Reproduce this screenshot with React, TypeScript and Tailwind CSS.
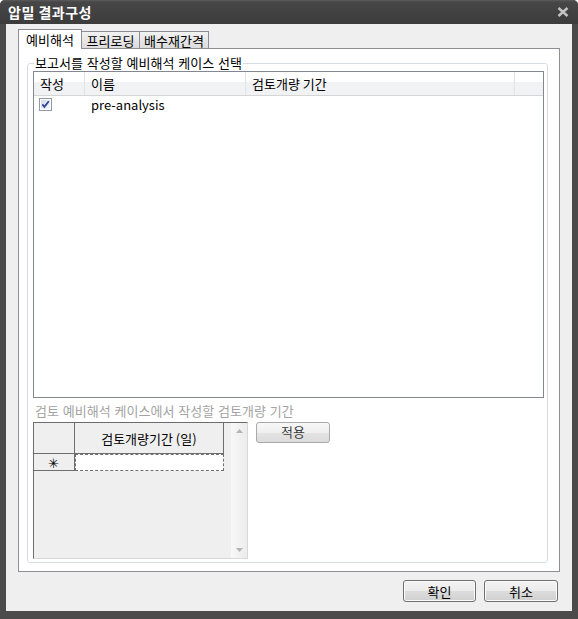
import React from "react";

function CheckBox() {
  return (
    <svg width="13" height="13" viewBox="0 0 13 13">
      <defs>
        <linearGradient id="cbg" x1="0" y1="0" x2="1" y2="1">
          <stop offset="0" stopColor="#d4dbe6" />
          <stop offset="1" stopColor="#f6f8fb" />
        </linearGradient>
      </defs>
      <rect x="0.5" y="0.5" width="12" height="12" fill="#fff" stroke="#8f99a8" />
      <rect x="2" y="2" width="9" height="9" fill="url(#cbg)" />
      <path d="M3.3 6.4 L5.4 8.8 L9.8 3.2" fill="none" stroke="#2a3f9c" strokeWidth="1.7" />
    </svg>
  );
}

function Btn({ children, w }: { children: React.ReactNode; w: string }) {
  return (
    <div
      className={`${w} h-[22px] flex items-center justify-center rounded-[3px] border border-[#707070] bg-[linear-gradient(#f3f3f3_0%,#ebebeb_50%,#dddddd_50%,#cfcfcf_100%)] leading-none text-black shadow-[inset_0_0_0_1px_#fbfbfb]`}
    >
      {children}
    </div>
  );
}

export default function App() {
  return (
    <div className="w-[578px] h-[619px] bg-[#4b4b4b] flex flex-col rounded-t-[5px] overflow-hidden font-['Noto_Sans_CJK_KR','Noto_Sans',sans-serif] text-[13px] text-black">
      {/* title bar */}
      <div className="h-[24px] shrink-0 flex items-center justify-between pl-[8px] pr-[9px] bg-[linear-gradient(#5c5c5c_0px,#474747_2px,#3c3c3c_100%)]">
        <span className="text-white font-bold text-[14px] leading-none tracking-[0.5px]">압밀 결과구성</span>
        <svg width="12" height="10" viewBox="0 0 12 10">
          <path d="M1.5 1 L10.5 9 M10.5 1 L1.5 9" stroke="#c4c4c4" strokeWidth="2.4" />
        </svg>
      </div>

      {/* body */}
      <div className="flex-1 mx-[6px] mb-[8px] bg-[#efefef] flex flex-col pt-[4px] px-[12px]">
        {/* tabs */}
        <div className="h-[20px] flex items-end">
          <div className="w-[64px] h-[20px] bg-white border-t border-l border-r border-[#8c8e94] flex items-center pl-[7px] leading-none relative z-10 -mb-px pb-px">
            예비해석
          </div>
          <div className="w-[58px] h-[17px] border-t border-r border-[#8c8e94] bg-[linear-gradient(#f2f2f2,#dcdcdc)] flex items-center justify-center leading-none">
            프리로딩
          </div>
          <div className="w-[69px] h-[17px] border-t border-r border-[#8c8e94] bg-[linear-gradient(#f2f2f2,#dcdcdc)] flex items-center justify-center leading-none">
            배수재간격
          </div>
        </div>

        {/* pane */}
        <div className="h-[524px] border border-[#8c8e94] bg-white flex flex-col">
          <div className="relative ml-[8px] mt-[14px] mr-[11px] mb-[8px] flex-1 border border-[#d5dde3] rounded-[3px] flex flex-col pl-[5px] pt-[7px]">
            <span className="absolute left-[6px] -top-[8px] bg-white px-[1px] leading-[14px] whitespace-nowrap [word-spacing:1px]">
              보고서를 작성할 예비해석 케이스 선택
            </span>

            {/* list view */}
            <div className="w-[511px] h-[327px] border border-[#828790] bg-white flex flex-col">
              <div className="h-[24px] flex border-b border-[#d5d5d5] bg-[linear-gradient(#ffffff_0%,#ffffff_45%,#f1f2f4_45%,#f1f2f4_100%)]">
                <div className="w-[51px] border-r border-[#e2e3e5] flex items-center pl-[6px] leading-none">작성</div>
                <div className="w-[161px] border-r border-[#e2e3e5] flex items-center pl-[6px] leading-none">이름</div>
                <div className="w-[269px] border-r border-[#e2e3e5] flex items-center pl-[6px] leading-none">검토개량 기간</div>
                <div className="flex-1" />
              </div>
              <div className="h-[17px] flex items-center">
                <div className="w-[51px] pl-[5px] flex items-center">
                  <CheckBox />
                </div>
                <div className="pl-[6px] leading-none">pre-analysis</div>
              </div>
            </div>

            {/* second label */}
            <div className="h-[24px] flex items-center pl-[2px] pt-[1px] text-[#a3a3a3] leading-none whitespace-nowrap [word-spacing:1px]">
              검토 예비해석 케이스에서 작성할 검토개량 기간
            </div>

            {/* grid + apply */}
            <div className="flex items-start">
              <div className="w-[215px] h-[137px] border-l border-t border-[#6c6c6c] border-r border-b border-r-[#d8d8d8] border-b-[#d8d8d8] bg-[#efefef] flex">
                <div className="w-[190px] flex flex-col">
                  <div className="flex h-[31px]">
                    <div className="w-[41px] border-r border-b border-[#6e6e6e] bg-[#efefef]" />
                    <div className="w-[150px] border-r border-b border-[#6e6e6e] bg-[#efefef] flex items-center justify-center leading-none">
                      검토개량기간 (일)
                    </div>
                  </div>
                  <div className="flex h-[17px]">
                    <div className="w-[41px] border-r border-b border-[#6e6e6e] bg-[#efefef] flex items-center justify-center text-[13px] leading-none">
                      ✳
                    </div>
                    <div className="w-[150px] border border-dashed border-[#707070] bg-white" />
                  </div>
                </div>
                <div className="flex-1" />
                <div className="w-[16px] bg-[linear-gradient(90deg,#f7f7f7,#ececec)] border-l border-[#f9f9f9] flex flex-col items-center justify-between py-[6px]">
                  <svg width="7" height="4" viewBox="0 0 7 4">
                    <path d="M3.5 0 L7 4 L0 4 Z" fill="#b4b4b4" />
                  </svg>
                  <svg width="7" height="4" viewBox="0 0 7 4">
                    <path d="M0 0 L7 0 L3.5 4 Z" fill="#b4b4b4" />
                  </svg>
                </div>
              </div>
              <div className="ml-[8px] w-[74px] h-[21px] rounded-[3px] border border-[#a9a9a9] bg-[linear-gradient(#f8f8f8_0%,#efefef_50%,#e4e4e4_50%,#dcdcdc_100%)] flex items-center justify-center leading-none text-[#3a3a3a] pb-[2px]">
                적용
              </div>
            </div>
          </div>
        </div>

        {/* bottom buttons */}
        <div className="mt-[8px] flex justify-end gap-[8px] pr-[2px]">
          <Btn w="w-[73px]">확인</Btn>
          <Btn w="w-[74px]">취소</Btn>
        </div>
      </div>
    </div>
  );
}
